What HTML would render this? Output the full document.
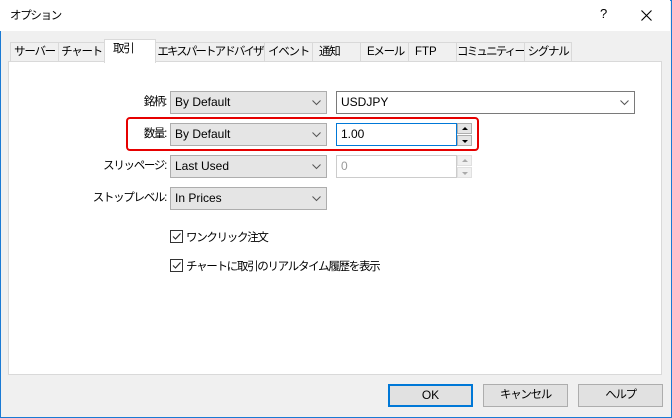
<!DOCTYPE html>
<html><head><meta charset="utf-8"><style>
*{box-sizing:border-box;margin:0;padding:0}
body{width:672px;height:418px;overflow:hidden;background:#f0f0f0;font-family:"Liberation Sans","Noto Sans CJK JP",sans-serif;font-size:12px;color:#000;position:relative}
.j{letter-spacing:-1.3px;font-size:11.5px;white-space:nowrap}
.win{position:absolute;left:0;top:0;width:672px;height:418px;border:1px solid #1a7ad4}
.title{position:absolute;left:0;top:0;width:670px;height:31px;background:#fff}
.a{position:absolute;white-space:nowrap}
.tab{position:absolute;top:42px;height:20px;border:1px solid #d9d9d9;border-bottom:none;background:#f0f0f0;text-align:center;line-height:18px;font-size:11.5px;white-space:nowrap;letter-spacing:-1.3px;overflow:hidden}
.panel{position:absolute;left:8px;top:61px;width:654px;height:314px;background:#fff;border:1px solid #d9d9d9}
.combo{position:absolute;height:23px;background:#e5e5e5;border:1px solid #adadad;padding-left:4px;line-height:21px}
.combo svg{position:absolute;right:5px;top:8px}
.lbl{position:absolute;width:90px;text-align:right;line-height:23px;left:76px;letter-spacing:-1.3px;font-size:11.5px;white-space:nowrap}
.fld{position:absolute;height:23px;border:1px solid #7a7a7a;background:#fff;padding-left:4px;line-height:21px}
.spin{position:absolute;width:15px;height:11px;background:#e5e5e5;border:1px solid #adadad}
.spin i{position:absolute;left:4px;top:3px;width:0;height:0;border-left:3px solid transparent;border-right:3px solid transparent}
.btn{position:absolute;top:384px;width:85px;height:23px;background:#e1e1e1;border:1px solid #adadad;text-align:center;line-height:21px}
.cb{position:absolute;width:13px;height:13px;border:1px solid #333;background:#fff}
</style></head><body>
<div class="win"></div>
<div class="title"></div>
<div class="a j" style="left:10px;top:7px">オプション</div>
<div class="a" style="left:600px;top:6px;font-size:13px">?</div>
<svg class="a" style="left:641px;top:10px" width="11" height="11"><path d="M0.5 0.5L10.5 10.5M10.5 0.5L0.5 10.5" stroke="#000" stroke-width="1.1"/></svg>

<div class="tab" style="left:10px;width:49px">サーバー</div>
<div class="tab" style="left:58px;width:47px">チャート</div>
<div class="tab" style="left:155px;width:110px;letter-spacing:-1.9px">エキスパートアドバイザ</div>
<div class="tab" style="left:264px;width:49px">イベント</div>
<div class="tab" style="left:312px;width:49px;text-align:left;padding-left:6px">通知</div>
<div class="tab" style="left:360px;width:49px;text-align:left;padding-left:6px">Eメール</div>
<div class="tab" style="left:408px;width:49px;text-align:left;padding-left:6px;letter-spacing:0">FTP</div>
<div class="tab" style="left:456px;width:69px;letter-spacing:-1.8px">コミュニティー</div>
<div class="tab" style="left:524px;width:48px">シグナル</div>
<div class="panel"></div>
<div class="a j" style="left:104px;top:39px;width:52px;height:24px;background:#fff;border:1px solid #d9d9d9;border-bottom:none;padding-left:8px;line-height:18px">取引</div>

<div class="lbl" style="top:91px">銘柄:</div>
<div class="combo" style="left:170px;top:91px;width:157px">By Default<svg width="9" height="6"><path d="M0.5 0.5L4.5 4.5L8.5 0.5" stroke="#555" fill="none"/></svg></div>
<div class="fld" style="left:336px;top:91px;width:299px;border-color:#7a7a7a">USDJPY<svg class="a" style="right:5px;top:8px" width="9" height="6"><path d="M0.5 0.5L4.5 4.5L8.5 0.5" stroke="#555" fill="none"/></svg></div>

<div class="a" style="left:126px;top:117px;width:353px;height:34px;border:2px solid #e60000;border-radius:4px"></div>
<div class="lbl" style="top:123px">数量:</div>
<div class="combo" style="left:170px;top:123px;width:157px">By Default<svg width="9" height="6"><path d="M0.5 0.5L4.5 4.5L8.5 0.5" stroke="#555" fill="none"/></svg></div>
<div class="fld" style="left:336px;top:123px;width:121px;border-color:#0078d7">1.00</div>
<div class="spin" style="left:457px;top:123px"><i style="border-bottom:3px solid #000"></i></div>
<div class="spin" style="left:457px;top:135px"><i style="border-top:3px solid #000;top:4px"></i></div>

<div class="lbl" style="top:155px">スリッページ:</div>
<div class="combo" style="left:170px;top:155px;width:157px">Last Used<svg width="9" height="6"><path d="M0.5 0.5L4.5 4.5L8.5 0.5" stroke="#555" fill="none"/></svg></div>
<div class="fld" style="left:336px;top:155px;width:121px;border-color:#ccc;color:#999">0</div>
<div class="spin" style="left:457px;top:155px;background:#f0f0f0;border-color:#e0e0e0"><i style="border-bottom:3px solid #aaa"></i></div>
<div class="spin" style="left:457px;top:167px;background:#f0f0f0;border-color:#e0e0e0"><i style="border-top:3px solid #aaa;top:4px"></i></div>

<div class="lbl" style="top:187px;left:60px;width:106px">ストップレベル:</div>
<div class="combo" style="left:170px;top:187px;width:157px">In Prices<svg width="9" height="6"><path d="M0.5 0.5L4.5 4.5L8.5 0.5" stroke="#555" fill="none"/></svg></div>

<div class="cb" style="left:170px;top:230px"><svg width="11" height="11"><path d="M2 5.5L4.5 8L9.5 2.5" stroke="#222" fill="none" stroke-width="1.1"/></svg></div>
<div class="a j" style="left:186px;top:229px">ワンクリック注文</div>
<div class="cb" style="left:170px;top:259px"><svg width="11" height="11"><path d="M2 5.5L4.5 8L9.5 2.5" stroke="#222" fill="none" stroke-width="1.1"/></svg></div>
<div class="a j" style="left:186px;top:258px">チャートに取引のリアルタイム履歴を表示</div>

<div class="btn" style="left:388px;border:2px solid #0078d7;line-height:19px">OK</div>
<div class="btn j" style="left:483px">キャンセル</div>
<div class="btn j" style="left:578px">ヘルプ</div>
</body></html>
